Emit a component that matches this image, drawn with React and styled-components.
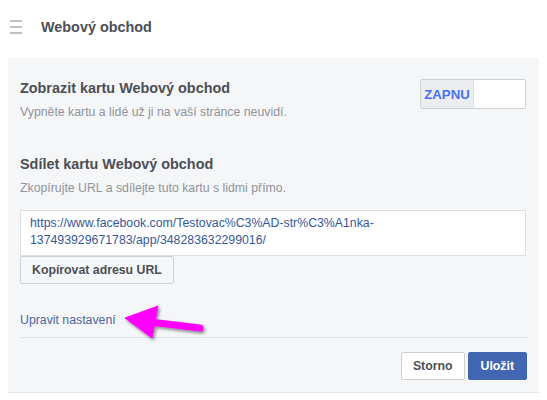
import React from "react";
import styled, { createGlobalStyle } from "styled-components";

const Global = createGlobalStyle`
  html, body { margin: 0; padding: 0; background: #ffffff; }
  body { font-family: "Liberation Sans", Arial, Helvetica, sans-serif; color: #4b4f56; }
  * { box-sizing: border-box; }
`;

const Page = styled.div`
  position: relative;
  width: 547px;
  height: 400px;
  overflow: hidden;
`;

const Header = styled.header`
  display: flex;
  align-items: center;
  height: 54px;
  padding-left: 10px;
  margin-bottom: 4px;
`;

const Burger = styled.div`
  display: flex;
  flex-direction: column;
  gap: 4px;
  width: 12px;
  margin-right: 19px;
  span {
    display: block;
    height: 2px;
    background: #bec2c9;
  }
`;

const HeaderTitle = styled.h1`
  margin: 0;
  font-size: 14.4px;
  line-height: 18px;
  font-weight: bold;
  color: #4b4f56;
`;

const Panel = styled.section`
  margin: 0 8px;
  background: #f5f6f7;
  border-bottom: 1px solid #e5e6e9;
  padding: 21px 12px 12px;
`;

const Row = styled.div`
  display: flex;
  justify-content: space-between;
  align-items: flex-start;
`;

const Title = styled.h2`
  margin: 0;
  font-size: 14.4px;
  line-height: 18px;
  font-weight: bold;
  color: #4b4f56;
`;

const Sub = styled.p`
  margin: 7px 0 0;
  font-size: 12.3px;
  line-height: 16px;
  color: #90949c;
`;

const Toggle = styled.div`
  display: flex;
  width: 106px;
  height: 30px;
  border: 1px solid #ccd0d5;
  border-radius: 2px;
  overflow: hidden;
  margin-right: 1px;
`;

const ToggleOn = styled.div`
  width: 53px;
  display: flex;
  align-items: center;
  justify-content: center;
  background: #ebedf0;
  border-right: 1px solid #dddfe2;
  color: #4a70f0;
  font-weight: bold;
  font-size: 13.2px;
`;

const ToggleOff = styled.div`
  flex: 1;
  background: #ffffff;
`;

const Section = styled.div`
  margin-top: ${(p) => p.$top || 0}px;
`;

const UrlBox = styled.div`
  margin: 14px 1px 0 0;
  height: 46px;
  background: #ffffff;
  border: 1px solid #dddfe2;
  padding: 4px 9px 6px;
  font-size: 12.3px;
  line-height: 17px;
  color: #365899;
`;

const Button = styled.button`
  height: 28px;
  padding: 0 ${(p) => p.$pad || 12}px;
  border-radius: 2px;
  font-family: inherit;
  font-size: 12.3px;
  font-weight: bold;
  cursor: pointer;
  border: 1px solid ${(p) => (p.$primary ? "#4267b2" : "#ccd0d5")};
  background: ${(p) => (p.$primary ? "#4267b2" : p.$light ? "#f5f6f7" : "#ffffff")};
  color: ${(p) => (p.$primary ? "#ffffff" : "#4b4f56")};
`;

const Link = styled.a`
  display: block;
  margin-top: 28px;
  font-size: 12.3px;
  line-height: 16px;
  color: #4b67a1;
  text-decoration: none;
`;

const Divider = styled.hr`
  margin: 9px 0 0;
  border: 0;
  border-top: 1px solid #dddfe2;
`;

const Footer = styled.div`
  display: flex;
  justify-content: flex-end;
  gap: 3px;
  margin-top: 14px;
`;

const Arrow = styled.svg`
  position: absolute;
  left: 110px;
  top: 296px;
  overflow: visible;
`;

export default function App() {
  return (
    <Page>
      <Global />
      <Header>
        <Burger>
          <span />
          <span />
          <span />
        </Burger>
        <HeaderTitle>Webový obchod</HeaderTitle>
      </Header>
      <Panel>
        <Row>
          <div>
            <Title>Zobrazit kartu Webový obchod</Title>
            <Sub>Vypněte kartu a lidé už ji na vaší stránce neuvidí.</Sub>
          </div>
          <Toggle>
            <ToggleOn>ZAPNU</ToggleOn>
            <ToggleOff />
          </Toggle>
        </Row>
        <Section $top={35}>
          <Title>Sdílet kartu Webový obchod</Title>
          <Sub>Zkopírujte URL a sdílejte tuto kartu s lidmi přímo.</Sub>
          <UrlBox>
            https://www.facebook.com/Testovac%C3%AD-str%C3%A1nka-137493929671783/app/348283632299016/
          </UrlBox>
          <Button $light $pad={11}>Kopírovat adresu URL</Button>
        </Section>
        <Link href="#">Upravit nastavení</Link>
        <Divider />
        <Footer>
          <Button $pad={11}>Storno</Button>
          <Button $primary>Uložit</Button>
        </Footer>
      </Panel>
      <Arrow width="110" height="50" viewBox="0 0 110 50">
        <defs>
          <filter id="sh" x="-30%" y="-50%" width="160%" height="200%">
            <feDropShadow dx="1.5" dy="2" stdDeviation="1.5" floodColor="#000" floodOpacity="0.45" />
          </filter>
        </defs>
        <g filter="url(#sh)" fill="#ff00ff" stroke="#ff00ff">
          <line x1="40" y1="26" x2="90" y2="32" strokeWidth="7" strokeLinecap="round" />
          <polygon points="15,22 48,10 42,42" strokeWidth="1" strokeLinejoin="round" />
        </g>
      </Arrow>
    </Page>
  );
}
